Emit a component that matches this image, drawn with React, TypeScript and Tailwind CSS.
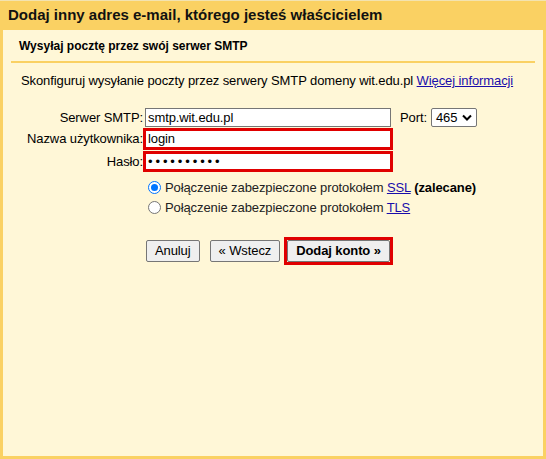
import React from "react";

const font = { fontFamily: '"Liberation Sans", Arial, sans-serif' };

const Radio = ({ checked }: { checked?: boolean }) => (
  <span
    className={`inline-flex h-[13px] w-[13px] items-center justify-center rounded-full border ${
      checked ? "border-[#0075ff] bg-white" : "border-[#767676] bg-white"
    }`}
  >
    {checked && <span className="h-[7px] w-[7px] rounded-full bg-[#0075ff]" />}
  </span>
);

const Link = ({ children }: { children: React.ReactNode }) => (
  <a href="#" className="text-[#1a0dab] underline">
    {children}
  </a>
);

const Button = ({ children, bold }: { children: React.ReactNode; bold?: boolean }) => (
  <button
    className={`h-[22px] rounded-[2px] border border-[#767676] bg-[#efefef] px-[8px] text-[13px] text-black ${
      bold ? "font-bold" : ""
    }`}
  >
    {children}
  </button>
);

export default function App() {
  return (
    <div
      style={font}
      className="flex h-[459px] w-[546px] flex-col border-t border-[#f3e3b0] bg-[#fad163] px-[3px] pb-[3px] text-[13px] tracking-[-0.1px] text-black"
    >
      <div className="flex h-[29px] items-center px-[5px] text-[15px] font-bold tracking-normal text-[#111]">
        Dodaj inny adres e-mail, którego jesteś właścicielem
      </div>

      <div className="flex-1 bg-[#fff7d7] px-[8px]">
        <div className="flex h-[31px] items-center px-[8px] text-[12px] font-bold tracking-normal">
          Wysyłaj pocztę przez swój serwer SMTP
        </div>
        <div className="h-[2px] bg-[#fad163]" />

        <p className="mt-[10px] pl-[10px] leading-[15px]">
          Skonfiguruj wysyłanie poczty przez serwery SMTP domeny wit.edu.pl{" "}
          <Link>Więcej informacji</Link>
        </p>

        {/* SMTP server form */}
        <div className="mt-[20px] -ml-[8px] flex flex-col">
          <div className="flex h-[19px] items-center">
            <label className="w-[141px] pr-[1px] text-right">Serwer SMTP:</label>
            <div className="ml-[1px] flex h-[19px] w-[246px] items-center border border-[#767676] bg-white px-[2px]">
              smtp.wit.edu.pl
            </div>
            <span className="ml-[9px]">Port:</span>
            <div className="ml-[4px] flex h-[19px] w-[46px] items-center justify-between rounded-[2px] border border-[#767676] bg-white pl-[4px] pr-[4px]">
              465
              <svg width="10" height="7" viewBox="0 0 10 7">
                <path d="M1 1.5 L5 5.5 L9 1.5" fill="none" stroke="#000" strokeWidth="2" />
              </svg>
            </div>
          </div>

          <div className="mt-[1px] flex h-[22px] items-center">
            <label className="w-[141px] pr-[1px] text-right">Nazwa użytkownika:</label>
            <div className="-ml-[1px] flex h-[22px] w-[250px] items-center border-[3px] border-[#e00000] bg-white px-[2px]">
              login
            </div>
          </div>

          <div className="mt-[1px] flex h-[21px] items-center">
            <label className="w-[141px] pr-[1px] text-right">Hasło:</label>
            <div className="-ml-[1px] flex h-[21px] w-[250px] items-center border-[3px] border-[#e00000] bg-white px-[2px] tracking-[2.9px]">
              ••••••••••
            </div>
          </div>

          <div className="mt-[8px] ml-[145px] flex flex-col gap-[5px] text-[#222]">
            <div className="flex h-[15px] items-center gap-[4px]">
              <Radio checked />
              <span>
                Połączenie zabezpieczone protokołem <Link>SSL</Link>{" "}
                <b className="text-black">(zalecane)</b>
              </span>
            </div>
            <div className="flex h-[15px] items-center gap-[4px]">
              <Radio />
              <span>
                Połączenie zabezpieczone protokołem <Link>TLS</Link>
              </span>
            </div>
          </div>

          <div className="mt-[22px] ml-[143px] flex items-center">
            <Button>Anuluj</Button>
            <div className="ml-[10px] flex">
              <Button>« Wstecz</Button>
            </div>
            <div className="ml-[4px] flex border-[3px] border-[#e00000]">
              <Button bold>Dodaj konto »</Button>
            </div>
          </div>
        </div>
      </div>
    </div>
  );
}
